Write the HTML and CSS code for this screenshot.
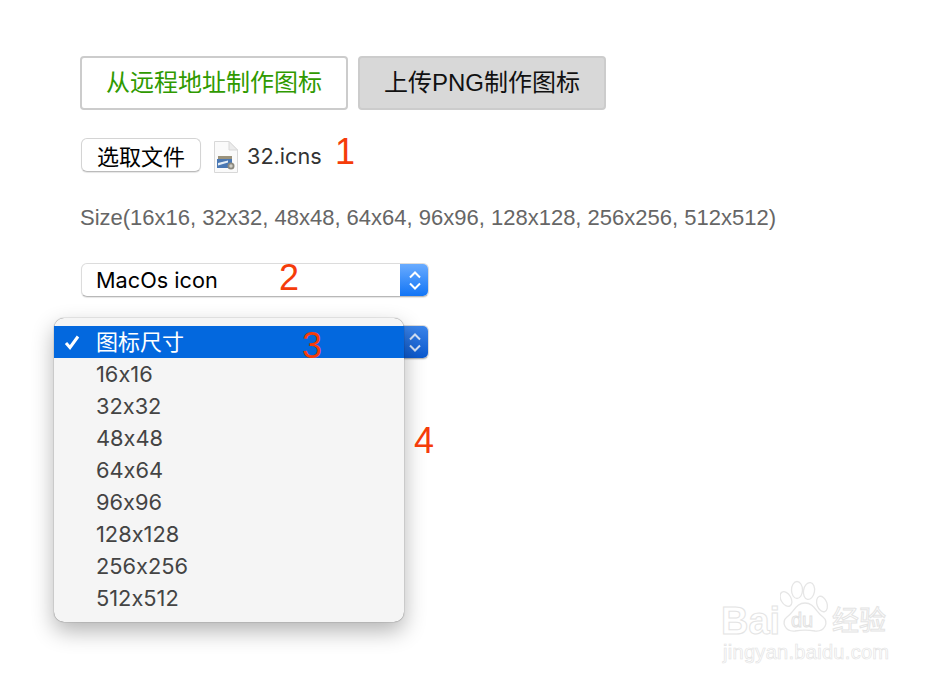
FILE: index.html
```html
<!DOCTYPE html>
<html lang="zh">
<head>
<meta charset="utf-8">
<title>图标</title>
<link rel="stylesheet" href="styles.css">
</head>
<body>
<main class="page">
  <div class="tabs">
    <button class="tab tab-active">从远程地址制作图标</button>
    <button class="tab tab-upload">上传PNG制作图标</button>
  </div>
  <div class="file-row">
    <button class="file-btn">选取文件</button>
    <svg class="file-icon" width="24" height="32" viewBox="0 0 24 32">
      <path d="M.5.5H15L23.500 9V31.500H.5Z" fill="#fafafa" stroke="#d8d8d8"/>
      <path d="M15 .5V9H23.500Z" fill="#ececec" stroke="#d8d8d8"/>
      <rect x="4" y="15" width="14" height="11" fill="#9a927c"/>
      <rect x="3" y="18" width="15" height="9" fill="#4a78b4"/>
      <path d="M4 22L14 19.500V21.500L4 24.500Z" fill="#e4edf6"/>
      <circle cx="17" cy="25" r="3.500" fill="#8b897f"/>
      <circle cx="17" cy="25" r="1.700" fill="#cfcdc5"/>
    </svg>
    <span class="file-name">32.icns</span>
  </div>
  <p class="size-note">Size(16x16, 32x32, 48x48, 64x64, 96x96, 128x128, 256x256, 512x512)</p>
  <div class="select">
    <span class="select-label">MacOs icon</span>
    <span class="stepper">
      <svg width="16" height="24" viewBox="0 0 16 24"><path d="M3 9.500L8 4.500L13 9.500M3 15.500L8 20.500L13 15.500" fill="none" stroke="#fff" stroke-width="2"/></svg>
    </span>
  </div>
  <div class="select select-size">
    <span class="select-label">图标尺寸</span>
    <span class="stepper stepper-dark">
      <svg width="16" height="24" viewBox="0 0 16 24"><path d="M3 9.500L8 4.500L13 9.500M3 15.500L8 20.500L13 15.500" fill="none" stroke="#d5e3f7" stroke-width="2"/></svg>
    </span>
  </div>
</main>

<ul class="menu">
  <li class="menu-item menu-selected">
    <svg class="check" width="16" height="16" viewBox="0 0 16 16"><path d="M2 9L6 13.500L14 2.500" fill="none" stroke="#fff" stroke-width="3"/></svg>图标尺寸
  </li>
  <li class="menu-item">16x16</li>
  <li class="menu-item">32x32</li>
  <li class="menu-item">48x48</li>
  <li class="menu-item">64x64</li>
  <li class="menu-item">96x96</li>
  <li class="menu-item">128x128</li>
  <li class="menu-item">256x256</li>
  <li class="menu-item">512x512</li>
</ul>

<span class="mark mark-1">1</span>
<span class="mark mark-2">2</span>
<span class="mark mark-3">3</span>
<span class="mark mark-4">4</span>

<div class="watermark">
  <svg class="paw" width="52" height="54" viewBox="0 0 52 54">
    <g fill="#fff" stroke="#e6e6e6" stroke-width="1.300">
      <ellipse cx="6" cy="19" rx="5" ry="8" transform="rotate(-30 6 19)"/>
      <ellipse cx="17" cy="10" rx="5.500" ry="8.500"/>
      <ellipse cx="29" cy="11" rx="5.500" ry="8.500" transform="rotate(10 29 11)"/>
      <ellipse cx="42" cy="24" rx="5" ry="8" transform="rotate(-20 42 24)"/>
      <path d="M25 23C34 23 36 32 43 37C49 42 45 52 35 51C29 50 21 50 15 51C5 52 1 42 7 37C14 32 16 23 25 23Z"/>
    </g>
    <text x="11" y="47" class="paw-text">du</text>
  </svg>
  <span class="wm-bai">Bai</span>
  <span class="wm-jy">经验</span>
  <span class="wm-url">jingyan.baidu.com</span>
</div>
</body>
</html>
```
FILE: styles.css
```css
* { box-sizing: border-box; }
html, body { margin: 0; padding: 0; }
body {
  width: 940px;
  height: 682px;
  overflow: hidden;
  background: #fff;
  position: relative;
  font-family: "Liberation Sans", "Noto Sans CJK SC", sans-serif;
}
.page {
  padding: 56px 0 0 80px;
  display: flex;
  flex-direction: column;
  align-items: flex-start;
}
.tabs { display: flex; gap: 10px; }
.tab {
  height: 54px;
  border: 2px solid #ccc;
  border-radius: 4px;
  font: 24px "Liberation Sans", "Noto Sans CJK SC", sans-serif;
  padding: 0 0 6px;
}
.tab-active { width: 268px; background: #fff; color: #2f9a00; }
.tab-upload { width: 248px; background: #d8d8d8; color: #111; }
.file-row {
  display: flex;
  align-items: center;
  margin: 28px 0 0 1px;
  height: 34px;
}
.file-btn {
  width: 120px;
  height: 34px;
  padding: 0 0 4px;
  background: #fff;
  border: 1px solid #d4d4d4;
  border-bottom-color: #bbb;
  border-radius: 6px;
  box-shadow: 0 1px 1px rgba(0,0,0,.1);
  color: #000;
  font: 22px "Liberation Sans", "Noto Sans CJK SC", sans-serif;
}
.file-icon { margin: 3px 0 0 13px; flex: none; }
.file-name { margin: 2px 0 0 9px; font: 21.700px Inter, "Noto Sans CJK SC", sans-serif; color: #333; }
.size-note {
  margin: 32px 0 0;
  height: 28px;
  line-height: 28px;
  font-size: 22px;
  color: #666;
}
.select {
  margin: 31px 0 0 1px;
  width: 348px;
  height: 34px;
  display: flex;
  justify-content: space-between;
  background: #fff;
  border: 1px solid #dcdcdc;
  border-bottom-color: #b8b8b8;
  border-radius: 6px;
  box-shadow: 0 1px 1px rgba(0,0,0,.1);
  overflow: hidden;
}
.select-size { margin-top: 28px; }
.select-label { padding-left: 14px; font: 21.700px/33px Inter, "Noto Sans CJK SC", sans-serif; color: #000; }
.stepper {
  width: 29px;
  margin: -1px -1px -1px 0;
  background: linear-gradient(#6cadff, #0f73f5);
  display: flex;
  align-items: center;
  justify-content: center;
}
.stepper-dark { background: linear-gradient(#3c85ea, #0a58ce); }
.menu {
  position: absolute;
  left: 54px;
  top: 318px;
  width: 350px;
  height: 304px;
  margin: 0;
  padding: 8px 0;
  list-style: none;
  background: #f5f5f5;
  border-radius: 10px;
  box-shadow: 0 0 1px 0 rgba(0,0,0,.7), 0 9px 22px rgba(0,0,0,.3);
}
.menu-item {
  height: 32px;
  padding-left: 42px;
  position: relative;
  font: 21.800px/33px Inter, "Noto Sans CJK SC", sans-serif;
  font-feature-settings: "calt" 0;
  font-variant-ligatures: none;
  color: #444;
}
.menu-selected { background: #0368de; color: #fff; font-size: 22px; line-height: 32px; }
.check {
  position: absolute;
  left: 10px;
  top: 8px;
}
.mark {
  position: absolute;
  font-size: 36px;
  line-height: 40px;
  color: #f53c0a;
}
.mark-1 { left: 335px; top: 132px; }
.mark-2 { left: 279px; top: 258px; }
.mark-3 { left: 302px; top: 326px; }
.mark-4 { left: 414px; top: 421px; }
.watermark {
  position: absolute;
  left: 720px;
  top: 580px;
  width: 180px;
  height: 90px;
  color: #fff;
  -webkit-text-stroke: 1px #e4e4e4;
}
.paw { position: absolute; left: 60px; top: 0; }
.paw-text { font-size: 20px; fill: #fff; stroke: #e2e2e2; stroke-width: 1; }
.wm-bai {
  position: absolute;
  left: 1px;
  top: 19px;
  font-size: 38px;
  line-height: 44px;
  font-weight: 700;
}
.wm-jy {
  position: absolute;
  left: 112px;
  top: 24px;
  font-size: 27px;
  line-height: 34px;
}
.wm-url {
  position: absolute;
  left: 3px;
  top: 60px;
  font-size: 20px;
  line-height: 24px;
  letter-spacing: .3px;
  -webkit-text-stroke: .7px #e4e4e4;
}
```
